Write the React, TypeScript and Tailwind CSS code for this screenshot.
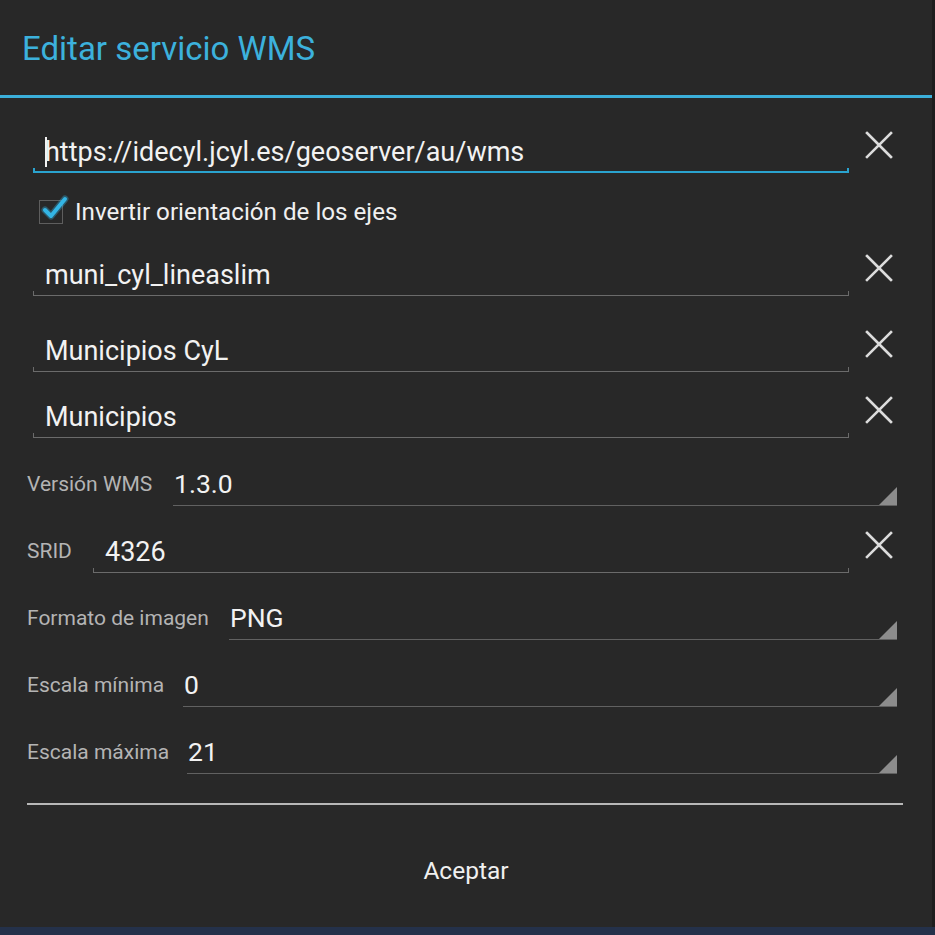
import React from "react";

const font = { fontFamily: "Roboto, 'Noto Sans', sans-serif" };

function ClearIcon() {
  return (
    <div className="flex h-[30px] w-[60px] items-center justify-center">
      <svg width="28" height="28" viewBox="0 0 28 28">
        <path d="M2 2 L26 26 M26 2 L2 26" stroke="#dcdcdc" strokeWidth="2.6" strokeLinecap="square" />
      </svg>
    </div>
  );
}

function EditLine({ focused }: { focused?: boolean }) {
  return focused ? (
    <div className="h-[5px] border-x-2 border-b-2 border-[#2aa3cf]" />
  ) : (
    <div className="h-[5px] border-x border-b border-[#6b6b6b]" />
  );
}

function TextRow({ height, value, focused }: { height: number; value: string; focused?: boolean }) {
  return (
    <div className="flex items-end" style={{ height }}>
      <div className="ml-[33px] w-[816px]">
        <div className="relative pl-[12px] text-[27px] leading-[30px] text-[#f2f2f2] mb-[1px]">
          {focused && <span className="absolute left-[12px] top-[0px] h-[30px] w-[2px] bg-[#f2f2f2]" />}
          {value}
        </div>
        <EditLine focused={focused} />
      </div>
      <div className="mb-[13px]">
        <ClearIcon />
      </div>
    </div>
  );
}

function SpinnerRow({ label, value, start }: { label: string; value: string; start: number }) {
  return (
    <div className="flex h-[67px] items-end">
      <div className="pl-[27px] mb-[10px] text-[21px] leading-[24px] text-[#b4b4b4]" style={{ width: start }}>
        {label}
      </div>
      <div className="flex flex-1 items-end justify-between border-b border-[#616161] mr-[35px]">
        <div className="pl-[1px] mb-[6px] text-[26.5px] leading-[30px] text-[#f2f2f2]">{value}</div>
        <svg width="18" height="18" viewBox="0 0 18 18" className="block">
          <path d="M18 0 L18 18 L0 18 Z" fill="#8c8c8c" />
        </svg>
      </div>
    </div>
  );
}

export default function App() {
  return (
    <div className="h-[935px] w-[935px] overflow-hidden bg-[#24314a]" style={font}>
      <div className="flex">
        <div className="h-[927px] w-[932px] bg-[#282828]">
          {/* title */}
          <div className="flex h-[95px] items-center pl-[22px] pt-[2px]">
            <span className="text-[33px] leading-none text-[#3cb1dc]">Editar servicio WMS</span>
          </div>
          <div className="h-[3px] bg-[#3bafda]" />

          <TextRow height={75} value="https://idecyl.jcyl.es/geoserver/au/wms" focused />

          <div className="flex h-[78px] items-center pl-[39px]">
            <div className="relative h-[24px] w-[24px] border border-[#5e5e5e]">
              <svg width="30" height="28" viewBox="0 0 30 28" className="absolute left-[0px] top-[-8px]">
                <path d="M5 17 L11 23 L25 6" fill="none" stroke="#33b5e5" strokeOpacity="0.35" strokeWidth="7" strokeLinecap="round" strokeLinejoin="round" />
                <path d="M5 17 L11 23 L25 6" fill="none" stroke="#33b5e5" strokeWidth="4" strokeLinecap="round" strokeLinejoin="round" />
              </svg>
            </div>
            <span className="ml-[12px] text-[24.2px] leading-[28px] text-[#f0f0f0]">Invertir orientación de los ejes</span>
          </div>

          <TextRow height={45} value="muni_cyl_lineaslim" />
          <TextRow height={76} value="Municipios CyL" />
          <TextRow height={66} value="Municipios" />

          <div className="h-[1px]" />
          <SpinnerRow label="Versión WMS" value="1.3.0" start={173} />

          <div className="flex h-[67px] items-end">
            <div className="pl-[27px] mb-[10px] w-[93px] text-[21px] leading-[24px] text-[#b4b4b4]">SRID</div>
            <div className="w-[756px]">
              <div className="pl-[12px] mb-[1px] text-[27px] leading-[30px] text-[#f2f2f2]">4326</div>
              <EditLine />
            </div>
            <div className="mb-[13px]">
              <ClearIcon />
            </div>
          </div>

          <SpinnerRow label="Formato de imagen" value="PNG" start={229} />
          <SpinnerRow label="Escala mínima" value="0" start={183} />
          <SpinnerRow label="Escala máxima" value="21" start={187} />

          <div className="mx-[27px] mt-[29px] h-[2px] w-[876px] bg-[#b8b8b8]" />

          <div className="flex h-[122px] justify-center pt-[51px]">
            <span className="text-[24.5px] leading-[30px] text-[#f0f0f0]">Aceptar</span>
          </div>
        </div>
        <div className="h-[927px] w-[3px] bg-[#1e1e1e]" />
      </div>
    </div>
  );
}
